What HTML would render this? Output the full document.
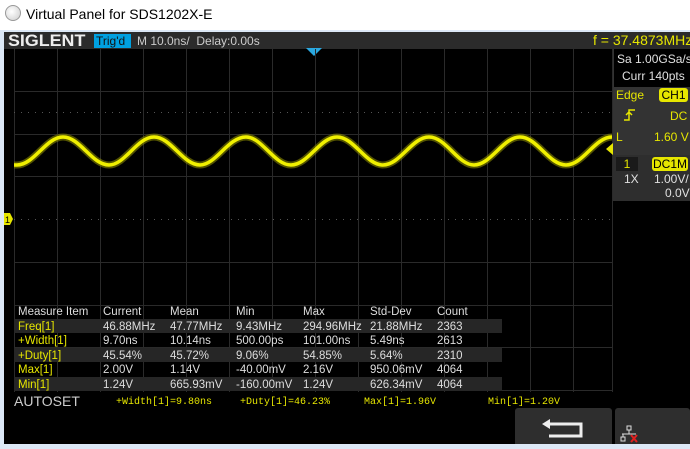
<!DOCTYPE html>
<html><head><style>
*{margin:0;padding:0;box-sizing:border-box}
body{width:690px;height:449px;background:#fff;position:relative;overflow:hidden;font-family:"Liberation Sans",sans-serif}
.a{position:absolute;white-space:nowrap}
.y{color:#e6e600}
.w{color:#e0e0e0}
</style></head><body>
<div class="a" style="left:0;top:0;width:690px;height:30px;background:#fff"></div>
<div class="a" style="left:5px;top:5px;width:16px;height:16px;border-radius:50%;border:1px solid #999;background:radial-gradient(circle at 40% 40%,#fff,#ccc)"></div>
<div class="a" style="left:26px;top:6px;font-size:14px;color:#000">Virtual Panel for SDS1202X-E</div>
<div class="a" style="left:0;top:30px;width:690px;height:419px;background:#dce8f6"></div>
<div class="a" style="left:4px;top:32px;width:686px;height:412px;background:#000"></div>
<!-- header -->
<div class="a" style="left:4px;top:32px;width:686px;height:17px;background:#2b2b2b"></div>
<div class="a" style="left:8px;top:31px;font-size:17px;font-weight:bold;color:#eee;transform:scaleX(1.05);transform-origin:left">SIGLENT</div>
<div class="a" style="left:94px;top:34px;width:37px;height:14px;background:#00a0e0;color:#111;font-size:12px;line-height:14px;padding-left:2px">Trig'd</div>
<div class="a w" style="left:137px;top:34px;font-size:12px;color:#ccc">M 10.0ns/ &nbsp;Delay:0.00s</div>
<div class="a y" style="left:593px;top:32px;font-size:14px">f = 37.4873MHz</div>
<svg class="a" style="left:306px;top:48px" width="16" height="9"><polygon points="0,0 16,0 8,8" fill="#2aa8e0"/></svg>
<!-- grid -->
<svg class="a" style="left:0;top:0" width="690" height="449">
<defs><clipPath id="c"><rect x="14" y="49" width="598" height="343"/></clipPath></defs>
<g stroke="#2a2a2a" stroke-width="1">
<line x1="14.5" y1="49" x2="14.5" y2="392"/>
<line x1="57.5" y1="49" x2="57.5" y2="392"/><line x1="100.5" y1="49" x2="100.5" y2="392"/><line x1="143.5" y1="49" x2="143.5" y2="392"/><line x1="186.5" y1="49" x2="186.5" y2="392"/><line x1="229.5" y1="49" x2="229.5" y2="392"/><line x1="272.5" y1="49" x2="272.5" y2="392"/><line x1="315.5" y1="49" x2="315.5" y2="392"/><line x1="358.5" y1="49" x2="358.5" y2="392"/><line x1="401.5" y1="49" x2="401.5" y2="392"/><line x1="444.5" y1="49" x2="444.5" y2="392"/><line x1="487.5" y1="49" x2="487.5" y2="392"/><line x1="530.5" y1="49" x2="530.5" y2="392"/><line x1="573.5" y1="49" x2="573.5" y2="392"/><line x1="612.5" y1="49" x2="612.5" y2="392"/>
<line x1="14" y1="91.5" x2="612" y2="91.5"/><line x1="14" y1="134.5" x2="612" y2="134.5"/><line x1="14" y1="176.5" x2="612" y2="176.5"/><line x1="14" y1="262.5" x2="612" y2="262.5"/><line x1="14" y1="305.5" x2="612" y2="305.5"/><line x1="14" y1="347.5" x2="612" y2="347.5"/><line x1="14" y1="390.5" x2="612" y2="390.5"/>
</g>
<g stroke="#555" stroke-dasharray="1,6">
<line x1="14" y1="112.5" x2="612" y2="112.5"/><line x1="14" y1="219.5" x2="612" y2="219.5"/>
</g>
<g clip-path="url(#c)" fill="none">
<path id="w" d="M14,165 L17,165 C34,165 46,137 63,137 C80,137 92,165 109,165 C125,165 137,137 154,137 C171,137 183,165 200,165 C216,165 228,137 246,137 C262,137 274,165 291,165 C308,165 320,137 337,137 C354,137 366,165 383,165 C400,165 412,137 429,137 C446,137 458,165 474,165 C491,165 503,137 520,137 C537,137 549,165 566,165 C583,165 595,137 612,137" stroke="#8a8a00" stroke-width="7" opacity="0.6"/>
<path d="M14,165 L17,165 C34,165 46,137 63,137 C80,137 92,165 109,165 C125,165 137,137 154,137 C171,137 183,165 200,165 C216,165 228,137 246,137 C262,137 274,165 291,165 C308,165 320,137 337,137 C354,137 366,165 383,165 C400,165 412,137 429,137 C446,137 458,165 474,165 C491,165 503,137 520,137 C537,137 549,165 566,165 C583,165 595,137 612,137" stroke="#f0f000" stroke-width="3.5"/>
</g>
<polygon points="4,213 10,213 13,219 10,225 4,225" fill="#e6e600"/>
<text x="5" y="223" font-size="9" font-family="Liberation Sans" fill="#000">1</text>
<polygon points="613,143 606,149 613,155" fill="#e6e600"/>
</svg>
<!-- right panel -->
<div class="a" style="left:613px;top:49px;width:77px;height:38px;background:#000;border-left:1px solid #333"></div>
<div class="a w" style="left:617px;top:52px;font-size:12px">Sa 1.00GSa/s</div>
<div class="a w" style="left:622px;top:69px;font-size:12px">Curr 140pts</div>
<div class="a" style="left:613px;top:87px;width:77px;height:68px;background:#333"></div>
<div class="a y" style="left:616px;top:88px;font-size:12px">Edge</div>
<div class="a" style="left:659px;top:88px;width:29px;height:14px;background:#e6e600;border-radius:3px;color:#000;font-size:12px;text-align:center;line-height:14px">CH1</div>
<svg class="a" style="left:623px;top:108px" width="14" height="14"><path d="M1,12 H6 V2 H12 M3,7 L6,4 L9,7" fill="none" stroke="#e6e600" stroke-width="1.5"/></svg>
<div class="a y" style="left:670px;top:109px;font-size:12px">DC</div>
<div class="a y" style="left:616px;top:130px;font-size:12px">L</div>
<div class="a y" style="left:654px;top:130px;font-size:12px">1.60 V</div>
<div class="a" style="left:613px;top:155px;width:77px;height:46px;background:#2e2e2e"></div>
<div class="a" style="left:616px;top:157px;width:22px;height:14px;background:#1a1a1a;color:#e6e600;font-size:12px;text-align:center">1</div>
<div class="a" style="left:652px;top:157px;width:36px;height:14px;background:#e6e600;border-radius:3px;color:#000;font-size:12px;text-align:center;line-height:14px">DC1M</div>
<div class="a w" style="left:624px;top:172px;font-size:12px">1X</div>
<div class="a w" style="left:654px;top:172px;font-size:12px">1.00V/</div>
<div class="a w" style="left:665px;top:186px;font-size:12px">0.0V</div>
<!-- table -->
<div class="a" style="left:14px;top:319px;width:488px;height:14px;background:#262626"></div>
<div class="a" style="left:14px;top:348px;width:488px;height:14px;background:#262626"></div>
<div class="a" style="left:14px;top:377px;width:488px;height:14px;background:#262626"></div>
<div class="a" style="left:14px;top:305px;width:600px;font-size:11.5px;line-height:14.5px;color:#ddd">
<div style="position:relative;height:14.5px"><span class="a" style="left:4px">Measure Item</span><span class="a" style="left:89px">Current</span><span class="a" style="left:156px">Mean</span><span class="a" style="left:222px">Min</span><span class="a" style="left:289px">Max</span><span class="a" style="left:356px">Std-Dev</span><span class="a" style="left:423px">Count</span></div>
<div style="position:relative;height:14.5px"><span class="a y" style="left:4px">Freq[1]</span><span class="a" style="left:89px">46.88MHz</span><span class="a" style="left:156px">47.77MHz</span><span class="a" style="left:222px">9.43MHz</span><span class="a" style="left:289px">294.96MHz</span><span class="a" style="left:356px">21.88MHz</span><span class="a" style="left:423px">2363</span></div>
<div style="position:relative;height:14.5px"><span class="a y" style="left:4px">+Width[1]</span><span class="a" style="left:89px">9.70ns</span><span class="a" style="left:156px">10.14ns</span><span class="a" style="left:222px">500.00ps</span><span class="a" style="left:289px">101.00ns</span><span class="a" style="left:356px">5.49ns</span><span class="a" style="left:423px">2613</span></div>
<div style="position:relative;height:14.5px"><span class="a y" style="left:4px">+Duty[1]</span><span class="a" style="left:89px">45.54%</span><span class="a" style="left:156px">45.72%</span><span class="a" style="left:222px">9.06%</span><span class="a" style="left:289px">54.85%</span><span class="a" style="left:356px">5.64%</span><span class="a" style="left:423px">2310</span></div>
<div style="position:relative;height:14.5px"><span class="a y" style="left:4px">Max[1]</span><span class="a" style="left:89px">2.00V</span><span class="a" style="left:156px">1.14V</span><span class="a" style="left:222px">-40.00mV</span><span class="a" style="left:289px">2.16V</span><span class="a" style="left:356px">950.06mV</span><span class="a" style="left:423px">4064</span></div>
<div style="position:relative;height:14.5px"><span class="a y" style="left:4px">Min[1]</span><span class="a" style="left:89px">1.24V</span><span class="a" style="left:156px">665.93mV</span><span class="a" style="left:222px">-160.00mV</span><span class="a" style="left:289px">1.24V</span><span class="a" style="left:356px">626.34mV</span><span class="a" style="left:423px">4064</span></div>
</div>
<div class="a" style="left:14px;top:393px;font-size:14px;color:#ccc">AUTOSET</div>
<div class="a y" style="left:116px;top:397px;font-size:10px;font-family:'Liberation Mono',monospace">+Width[1]=9.80ns</div>
<div class="a y" style="left:240px;top:397px;font-size:10px;font-family:'Liberation Mono',monospace">+Duty[1]=46.23%</div>
<div class="a y" style="left:364px;top:397px;font-size:10px;font-family:'Liberation Mono',monospace">Max[1]=1.96V</div>
<div class="a y" style="left:488px;top:397px;font-size:10px;font-family:'Liberation Mono',monospace">Min[1]=1.20V</div>
<!-- buttons -->
<div class="a" style="left:515px;top:408px;width:97px;height:36px;background:#2e2e2e;border-radius:3px 3px 0 0"></div>
<div class="a" style="left:615px;top:408px;width:75px;height:36px;background:#2e2e2e;border-radius:3px 3px 0 0"></div>
<svg class="a" style="left:540px;top:418px" width="50" height="24"><path d="M6,6 H41 V18 H9" fill="none" stroke="#eee" stroke-width="3"/><polygon points="2,6 10,1 10,11" fill="#eee"/></svg>
<svg class="a" style="left:620px;top:425px" width="20" height="18"><g stroke="#ddd" fill="none" stroke-width="1"><rect x="7" y="1" width="4" height="4"/><line x1="9" y1="5" x2="9" y2="9"/><line x1="2" y1="9" x2="16" y2="9"/><rect x="1" y="12" width="4" height="4"/><line x1="3" y1="9" x2="3" y2="12"/></g><path d="M11,10 L17,17 M17,10 L11,17" stroke="#e02020" stroke-width="2"/></svg>
</body></html>
